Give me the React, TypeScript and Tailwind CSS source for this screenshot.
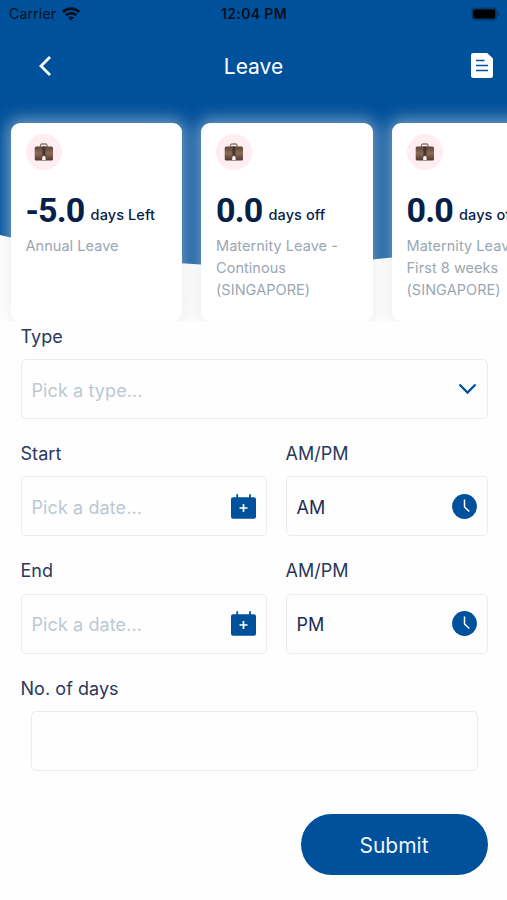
import type { ReactNode } from "react";

const leaves = [
  { value: "-5.0", unit: "days Left", lines: ["Annual Leave"] },
  { value: "0.0", unit: "days off", lines: ["Maternity Leave -", "Continous", "(SINGAPORE)"] },
  { value: "0.0", unit: "days off", lines: ["Maternity Leave -", "First 8 weeks", "(SINGAPORE)"] },
];

const WifiIcon = () => (
  <svg className="h-[14px] w-[18px]" viewBox="0 0 18 14" fill="none" stroke="#03101f">
    <path d="M0.8 4.9C5.5 0.5 12.5 0.5 17.2 4.9" strokeWidth="2.8" />
    <path d="M3.7 8.2c2.9-2.7 7.7-2.7 10.6 0" strokeWidth="2.6" />
    <path d="M9 13.6 6 10.6c1.7-1.5 4.3-1.5 6 0z" fill="#03101f" stroke="none" />
  </svg>
);

const BatteryIcon = () => (
  <svg className="h-[14px] w-[29px]" viewBox="0 0 29 14">
    <rect x="0.5" y="0.5" width="25.5" height="13" rx="4" fill="#023a70" />
    <rect x="2.2" y="2.5" width="22" height="9" rx="2" fill="#000" />
    <path d="M26.5 4.5c2.3 1 2.3 4 0 5z" fill="#023a70" />
  </svg>
);

const DocumentIcon = () => (
  <svg className="h-[25px] w-[22px]" viewBox="0 0 22 25">
    <path d="M2.3 0h13.9L22 5.6v17a2.3 2.3 0 0 1-2.3 2.4H2.3A2.3 2.3 0 0 1 0 22.6V2.3A2.3 2.3 0 0 1 2.3 0z" fill="#fff" />
    <path d="M5 7.5h8.5M5 12.5h12M5 17.5h12" stroke="#00519b" strokeWidth="1.4" />
  </svg>
);

const BriefcaseIcon = () => (
  <svg className="h-[18px] w-[20px]" viewBox="0 0 20 18">
    <defs>
      <linearGradient id="leather" x1="0" y1="0" x2="0" y2="1">
        <stop offset="0" stopColor="#5d4638" />
        <stop offset="0.5" stopColor="#8a6a57" />
        <stop offset="1" stopColor="#4e382d" />
      </linearGradient>
    </defs>
    <path d="M6.5 4V2.5Q6.5 1 8 1h3.5Q13 1 13 2.5V4" fill="none" stroke="#8b7a70" strokeWidth="1.3" />
    <rect x="0.7" y="3.5" width="18.3" height="14" rx="1.5" fill="url(#leather)" />
    <rect x="8.4" y="3.5" width="3" height="9" fill="#49352c" />
    <path d="M8.2 17v-2.3q0-1.7 1.7-1.7t1.7 1.7V17z" fill="#fff5f4" />
  </svg>
);

const CalendarIcon = () => (
  <svg className="h-[25px] w-[25px] shrink-0" viewBox="0 0 25 25">
    <path d="M6.2 0.3V5M19 0.3V5" stroke="#00519b" strokeWidth="1.8" />
    <rect y="3.2" width="25" height="21.5" rx="2" fill="#00519b" />
    <path d="M12.5 10v8M8.5 14h8" stroke="#fff" strokeWidth="1.7" />
  </svg>
);

const ClockIcon = () => (
  <svg className="h-[25px] w-[25px] shrink-0" viewBox="0 0 25 25">
    <circle cx="12.5" cy="12.5" r="12.4" fill="#00519b" />
    <path d="M12.5 5.5v7.5l4.8 4.5" fill="none" stroke="#fff" strokeWidth="1.5" />
  </svg>
);

const Label = ({ children }: { children: ReactNode }) => (
  <span className="h-[33.3px] text-[18px] leading-[22px] tracking-[0.05px] text-[#29395b]">{children}</span>
);

const Field = ({ label, children }: { label: string; children: ReactNode }) => (
  <div className="flex flex-col">
    <Label>{label}</Label>
    <div className="flex h-[60px] items-center justify-between rounded-[5px] border-[1.5px] border-[#e9edf0] px-[10px] text-[18px]">
      {children}
    </div>
  </div>
);

const Placeholder = ({ children }: { children: ReactNode }) => (
  <span className="pt-[2px] tracking-[0.1px] text-[#bcc8d1]">{children}</span>
);

const App = () => {
  return (
    <div className="flex h-[900px] w-[507px] flex-col overflow-hidden bg-[#fefefe] font-['Inter',sans-serif]">
      {/* HEADER */}
      <header className="relative h-[321px] shrink-0 overflow-hidden">
        <svg className="absolute inset-0" width="507" height="321" viewBox="0 0 507 321">
          <path d="M0 0h507v236Q440 252 392 257.5 300 268 201 264.5 90 258 0 235z" fill="#00519b" />
        </svg>
        <div className="relative flex h-full flex-col">
          <div className="grid h-[27px] shrink-0 grid-cols-3 items-center pl-[9px] pr-[7px] text-[14px] text-[#03101f]">
            <div className="flex items-center gap-[6px]">
              <span className="tracking-[0.2px]">Carrier</span>
              <WifiIcon />
            </div>
            <span className="-ml-[1px] text-center font-semibold tracking-[0.35px]">12:04 PM</span>
            <div className="flex justify-end">
              <BatteryIcon />
            </div>
          </div>
          <div className="grid h-[77px] shrink-0 grid-cols-[1fr_auto_1fr] items-center pl-[39px] pr-[14px]">
            <svg className="h-[20px] w-[12px]" viewBox="0 0 12 20" fill="none" stroke="#fff" strokeWidth="2.8">
              <path d="M11 1 2 10l9 9" />
            </svg>
            <h1 className="-ml-[25px] pt-[3px] text-[21px] text-white">Leave</h1>
            <div className="flex justify-end">
              <DocumentIcon />
            </div>
          </div>
          <div className="flex gap-[19px] pl-[10.5px] pt-[19px]">
            {leaves.map((leave, i) => (
              <div key={i} className="h-[198px] w-[171.5px] shrink-0 rounded-[9px] bg-white pl-[15px] pt-[11px] shadow-[0_0_16px_4px_rgba(228,232,238,0.5)]">
                <div className="flex h-[36px] w-[36px] items-center justify-center rounded-full bg-[#ffeef1]">
                  <BriefcaseIcon />
                </div>
                <div className="mt-[20px] flex items-end gap-[6px] whitespace-nowrap text-[#06204a]">
                  <span className="font-['Roboto',sans-serif] text-[34px] font-bold leading-[40px] tracking-[-0.8px]">{leave.value}</span>
                  <span className="pb-[6px] text-[14.5px] font-medium leading-[18px] tracking-[0.1px]">{leave.unit}</span>
                </div>
                <p className="mt-[5px] whitespace-nowrap text-[14.5px] leading-[22px] tracking-[0.05px] text-[#9aa7b3]">
                  {leave.lines.map((line) => (
                    <span key={line} className="block">{line}</span>
                  ))}
                </p>
              </div>
            ))}
          </div>
        </div>
      </header>

      {/* FORM */}
      <main className="flex flex-col gap-[23.9px] pl-[20.5px] pr-[19.5px] pt-[5px]">
        <Field label="Type">
          <Placeholder>Pick a type...</Placeholder>
          <svg className="h-[12px] w-[19px]" viewBox="0 0 19 12" fill="none" stroke="#00519b" strokeWidth="2.3">
            <path d="M1.5 1.5 9.5 9.5l8-8" />
          </svg>
        </Field>
        <div className="grid grid-cols-[246px_202px] gap-[19px]">
          <Field label="Start">
            <Placeholder>Pick a date...</Placeholder>
            <CalendarIcon />
          </Field>
          <Field label="AM/PM">
            <span className="pt-[2px] text-[#1b2d54]">AM</span>
            <ClockIcon />
          </Field>
        </div>
        <div className="grid grid-cols-[246px_202px] gap-[19px]">
          <Field label="End">
            <Placeholder>Pick a date...</Placeholder>
            <CalendarIcon />
          </Field>
          <Field label="AM/PM">
            <span className="pt-[2px] text-[#1b2d54]">PM</span>
            <ClockIcon />
          </Field>
        </div>
        <div className="flex flex-col">
          <Label>No. of days</Label>
          <div className="mx-[10px] h-[60px] rounded-[5px] border-[1.5px] border-[#e9edf0]" />
        </div>
        <button className="mt-[19.5px] h-[61px] w-[187px] self-end rounded-full bg-[#00519b] pt-[2px] text-[21px] text-[#f0f6fb]">
          Submit
        </button>
      </main>
    </div>
  );
};

export default App;
